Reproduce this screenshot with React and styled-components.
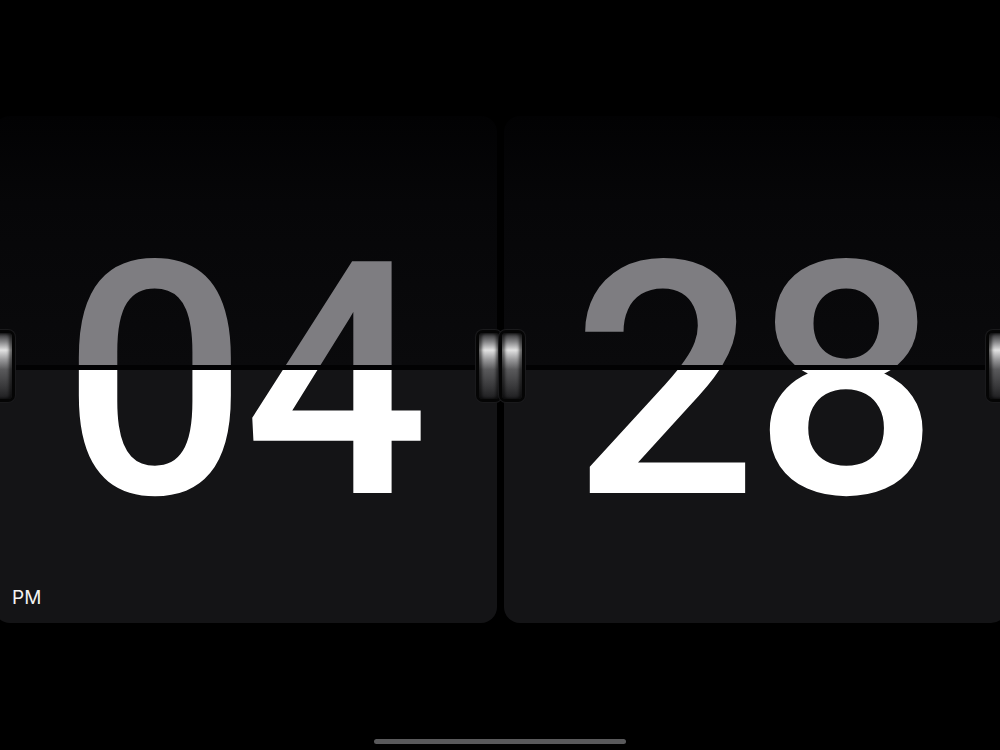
import React from "react";
import styled, { createGlobalStyle } from "styled-components";

const Global = createGlobalStyle`
  html, body { margin: 0; padding: 0; background: #000; }
  body { font-family: Inter, "Noto Sans", sans-serif; }
`;

const Screen = styled.div`
  width: 1000px;
  height: 750px;
  overflow: hidden;
  display: flex;
  flex-direction: column;
  background: #000;
`;

const ClockRow = styled.div`
  display: flex;
  gap: 7px;
  margin-top: 116px;
  margin-left: -6px;
  width: 1013px;
`;

const Card = styled.div`
  position: relative;
  width: 503px;
  display: flex;
  flex-direction: column;
`;

const UpperHalf = styled.div`
  height: 249px;
  overflow: hidden;
  border-radius: 16px 16px 0 0;
  background: linear-gradient(180deg, #020203 0%, #060608 35%, #0a0a0c 100%);
`;

const Split = styled.div`
  height: 5px;
  background: #020203;
`;

const LowerHalf = styled.div`
  position: relative;
  height: 253px;
  overflow: hidden;
  border-radius: 0 0 16px 16px;
  background: #141416;
`;

const Numeral = styled.div`
  font-family: Roboto, "Noto Sans", sans-serif;
  font-size: 326px;
  font-weight: 500;
  line-height: 326px;
  height: 326px;
  padding-top: ${(p) => p.$pad}px;
  margin-top: ${(p) => p.$shift}px;
  text-align: center;
  letter-spacing: -4px;
  text-indent: -4px;
  color: ${(p) => p.$color};
  white-space: nowrap;
`;

const Meridiem = styled.div`
  position: absolute;
  left: 18px;
  bottom: 14px;
  font-family: Inter, "Noto Sans", sans-serif;
  font-size: 19px;
  color: #f2f2f2;
`;

const Hinge = styled.div`
  position: absolute;
  top: 217px;
  ${(p) => (p.$side === "left" ? "left: -2px;" : "right: -2px;")}
  width: 20px;
  height: 66px;
  border-radius: 4px;
  background: linear-gradient(
    180deg,
    #2a2a2c 0%,
    #8a8a8c 14%,
    #e2e2e2 26%,
    #9a9a9c 40%,
    #5a5a5c 55%,
    #3a3a3c 80%,
    #1e1e20 100%
  );
  box-shadow: inset 3px 0 3px rgba(0, 0, 0, 0.55),
    inset -3px 0 3px rgba(0, 0, 0, 0.55), 0 0 0 3px #050505,
    0 0 0 4px #1a1a1c;
`;

const Spacer = styled.div`
  flex: 1;
`;

const HomeBar = styled.div`
  align-self: center;
  width: 252px;
  height: 5px;
  border-radius: 3px;
  background: #59595b;
  margin-bottom: 6px;
`;

const PAD = 103;

function FlipCard({ value, meridiem }) {
  return (
    <Card>
      <UpperHalf>
        <Numeral $color="#7e7d81" $pad={PAD} $shift={0}>
          {value}
        </Numeral>
      </UpperHalf>
      <Split />
      <LowerHalf>
        <Numeral $color="#ffffff" $pad={PAD} $shift={-254}>
          {value}
        </Numeral>
        {meridiem && <Meridiem>{meridiem}</Meridiem>}
      </LowerHalf>
      <Hinge $side="left" />
      <Hinge $side="right" />
    </Card>
  );
}

export default function App() {
  return (
    <Screen>
      <Global />
      <ClockRow>
        <FlipCard value="04" meridiem="PM" />
        <FlipCard value="28" />
      </ClockRow>
      <Spacer />
      <HomeBar />
    </Screen>
  );
}
